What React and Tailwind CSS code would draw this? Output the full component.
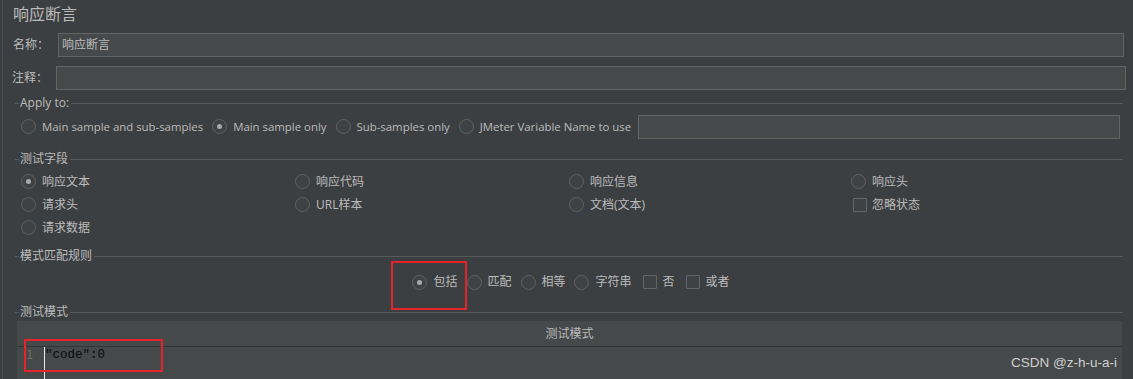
import React from "react";

const CJK = { fontFamily: '"Open Sans", "Noto Sans CJK SC", sans-serif' };

function Radio({ checked }) {
  return (
    <span className="relative flex h-[15px] w-[15px] shrink-0 items-center justify-center rounded-full border border-[#5f6263] bg-[#3e4244]">
      {checked && <span className="h-[5px] w-[5px] rounded-full bg-[#a9a9a9]" />}
    </span>
  );
}

function Check() {
  return <span className="h-[14px] w-[14px] shrink-0 rounded-[1px] border border-[#636566] bg-[#3e4244]" />;
}

function Header({ children }) {
  return (
    <div className="flex h-[14px] items-center">
      <div className="h-px w-[4px] bg-[#56595b]" />
      <span className="ml-[1px] mr-[2px] text-[12px] leading-[14px] text-[#bbbbbb]">{children}</span>
      <div className="h-px flex-1 bg-[#56595b]" />
    </div>
  );
}

function Opt({ label, checked, w, en }) {
  return (
    <div className={"flex items-center " + (w || "")}>
      <Radio checked={checked} />
      <span className={"ml-[6px] text-[#bbbbbb] " + (en ? "text-[11.4px]" : "text-[12px]")}>{label}</span>
    </div>
  );
}

export default function App() {
  return (
    <div className="relative flex h-[379px] w-[1133px] overflow-hidden bg-[#3c3f41]" style={CJK}>
      <div className="w-[2px]" />
      <div className="w-px bg-[#4b4e50]" />
      <div className="flex flex-1 flex-col">
        <div className="h-[33px] pl-[10px] pt-[3px] text-[16px] leading-[22px] text-[#bbbbbb]">响应断言</div>

        <div className="flex h-[24px] items-center pl-[10px] pr-[9px]">
          <span className="w-[45px] text-[12px] text-[#bbbbbb]">名称：</span>
          <div className="flex h-[24px] flex-1 items-center border border-[#646464] bg-[#45494a] pl-[3px] text-[12px] text-[#bbbbbb]">响应断言</div>
        </div>

        <div className="mt-[9px] flex h-[24px] items-center pl-[9px] pr-[7px]">
          <span className="w-[44px] text-[12px] text-[#bbbbbb]">注释：</span>
          <div className="h-[24px] flex-1 border border-[#646464] bg-[#45494a]" />
        </div>

        <div className="ml-[12px] mr-[10px] flex flex-1 flex-col">
          <div className="mt-[6px]"><Header>Apply to:</Header></div>
          <div className="mt-[5px] flex h-[24px] items-center pl-[6px]">
            <Opt en label="Main sample and sub-samples" />
            <div className="ml-[9px]"><Opt en label="Main sample only" checked /></div>
            <div className="ml-[9px]"><Opt en label="Sub-samples only" /></div>
            <div className="ml-[9px]"><Opt en label="JMeter Variable Name to use" /></div>
            <div className="ml-[7px] mr-[3px] h-[24px] flex-1 border border-[#646464] bg-[#45494a]" />
          </div>

          <div className="mt-[13px]"><Header>测试字段</Header></div>
          <div className="mt-[4px] flex flex-col pl-[6px]">
            <div className="flex h-[23px] items-center">
              <Opt w="w-[274px]" label="响应文本" checked />
              <Opt w="w-[274px]" label="响应代码" />
              <Opt w="w-[282px]" label="响应信息" />
              <Opt label="响应头" />
            </div>
            <div className="flex h-[23px] items-center">
              <Opt w="w-[274px]" label="请求头" />
              <Opt w="w-[274px]" label="URL样本" />
              <Opt w="w-[282px]" label="文档(文本)" />
              <div className="ml-[2px] flex items-center">
                <Check />
                <span className="ml-[5px] text-[12px] text-[#bbbbbb]">忽略状态</span>
              </div>
            </div>
            <div className="flex h-[23px] items-center">
              <Opt label="请求数据" />
            </div>
          </div>

          <div className="mt-[10px]"><Header>模式匹配规则</Header></div>
          <div className="mt-[7px] flex h-[24px] items-center justify-center pl-[4px] text-[12px] text-[#bbbbbb]">
            <div className="relative flex items-center">
              <Radio checked />
              <span className="ml-[6px] w-[24px]">包括</span>
              <div className="pointer-events-none absolute left-[-21px] top-[-12px] h-[49px] w-[76px] border-2 border-[#e5232b]" />
            </div>
            <div className="ml-[10px] flex items-center">
              <Radio />
              <span className="ml-[5px]">匹配</span>
            </div>
            <div className="ml-[10px] flex items-center">
              <Radio />
              <span className="ml-[5px]">相等</span>
            </div>
            <div className="ml-[9px] flex items-center">
              <Radio />
              <span className="ml-[6px]">字符串</span>
            </div>
            <div className="ml-[11px] flex items-center">
              <Check />
              <span className="ml-[6px]">否</span>
            </div>
            <div className="ml-[11px] flex items-center">
              <Check />
              <span className="ml-[6px]">或者</span>
            </div>
          </div>

          <div className="mt-[11px]"><Header>测试模式</Header></div>
          <div className="ml-[2px] mr-[1px] mt-[2px] flex flex-1 flex-col bg-[#45494a]">
            <div className="flex h-[26px] items-center justify-center border-b border-[#323436] text-[12px] text-[#bbbbbb]">测试模式</div>
            <div className="relative flex flex-1">
              <div className="w-[27px] pl-[9px] pt-[1px] text-[12px] leading-[14px] text-[#6f725f]" style={{ fontFamily: '"DejaVu Sans Mono", monospace' }}>1</div>
              <div className="w-px bg-[#e8e8e8]" />
              <div className="pt-[1px] text-[12.5px] leading-[14px] text-[#0a0a0a]" style={{ fontFamily: '"Liberation Mono", monospace' }}>"code":0</div>
              <div className="pointer-events-none absolute left-[7px] top-[-8px] h-[33px] w-[139px] border-2 border-[#e5232b]" />
              <div className="absolute right-[5px] top-[8px] text-[13.5px] leading-[16px] text-[#cfcfcf]" style={{ fontFamily: '"Liberation Sans", Arial, sans-serif' }}>CSDN @z-h-u-a-i</div>
            </div>
          </div>
        </div>
      </div>
    </div>
  );
}
